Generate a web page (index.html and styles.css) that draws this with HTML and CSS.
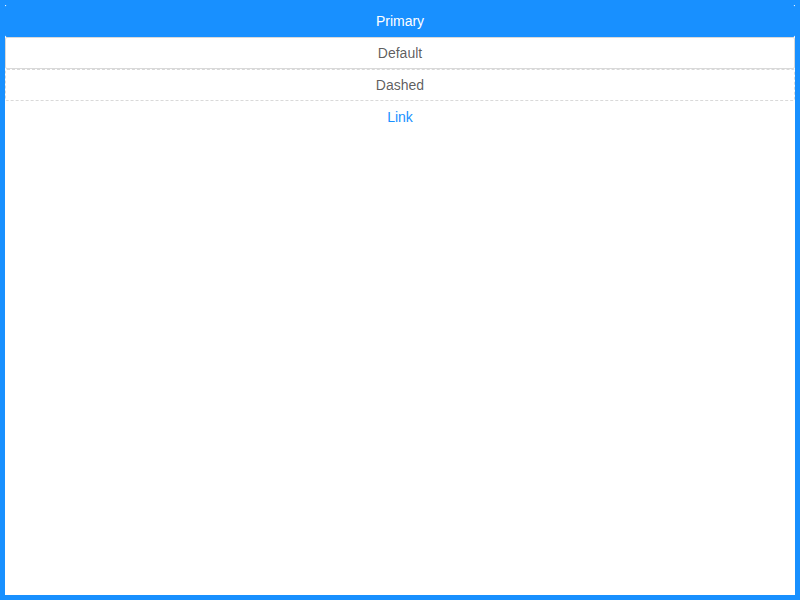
FILE: index.html
```html
<!DOCTYPE html>
<html>
<head>
<meta charset="utf-8">
<link rel="stylesheet" href="styles.css">
</head>
<body>
<div class="frame">
  <button class="btn btn-primary">Primary</button>
  <button class="btn btn-default">Default</button>
  <button class="btn btn-dashed">Dashed</button>
  <button class="btn btn-link">Link</button>
</div>
</body>
</html>
```
FILE: styles.css
```css
html, body {
  margin: 0;
  padding: 0;
  background: #ffffff;
}
.frame {
  box-sizing: border-box;
  width: 800px;
  height: 600px;
  border: 5px solid #1890ff;
  background: #ffffff;
  display: flex;
  flex-direction: column;
}
.btn {
  display: block;
  box-sizing: border-box;
  width: 100%;
  height: 32px;
  margin: 0;
  padding: 0 15px;
  font-family: "Liberation Sans", Arial, sans-serif;
  font-size: 14px;
  line-height: 30px;
  text-align: center;
  border: 1px solid transparent;
  border-radius: 2px;
  background: #ffffff;
  color: rgba(0, 0, 0, 0.65);
  cursor: pointer;
  outline: none;
}
.btn-primary {
  background: #1890ff;
  border-color: #1890ff;
  color: #ffffff;
}
.btn-default {
  border-color: #d9d9d9;
}
.btn-dashed {
  border: 1px dashed #d9d9d9;
}
.btn-link {
  color: #1890ff;
  background: transparent;
}
```
